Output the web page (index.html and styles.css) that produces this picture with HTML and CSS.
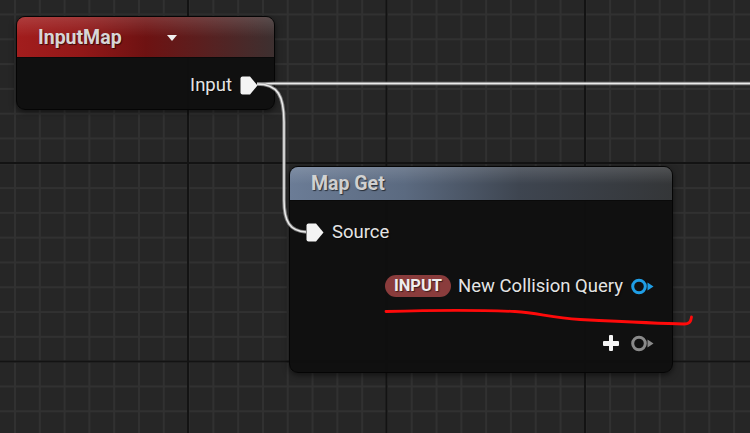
FILE: index.html
```html
<!DOCTYPE html>
<html lang="en">
<head>
  <meta charset="UTF-8" />
  <meta name="viewport" content="width=device-width, initial-scale=1.0"/>
  <title>Blueprint - Map Get</title>
  <link rel="stylesheet" href="styles.css">
</head>
<body>
  <div class="graph">

    <div class="node node-input">
      <div class="node-header header-red">
        <span class="node-title">InputMap</span>
        <span class="dropdown"></span>
      </div>
      <div class="node-body">
        <div class="pin-row out">
          <span class="pin-label">Input</span>
          <svg class="pin exec" width="18" height="19" viewBox="0 0 18 19"><path d="M2.5 0.5 H10 L17.5 9.5 L10 18.5 H2.5 Q0.5 18.5 0.5 16.5 V2.5 Q0.5 0.5 2.5 0.5 Z"/></svg>
        </div>
      </div>
    </div>

    <div class="node node-get">
      <div class="node-header header-blue">
        <span class="node-title">Map Get</span>
      </div>
      <div class="node-body">
        <div class="pin-row in first">
          <svg class="pin exec" width="18" height="19" viewBox="0 0 18 19"><path d="M2.5 0.5 H10 L17.5 9.5 L10 18.5 H2.5 Q0.5 18.5 0.5 16.5 V2.5 Q0.5 0.5 2.5 0.5 Z"/></svg>
          <span class="pin-label">Source</span>
        </div>
        <div class="pin-row out second">
          <span class="badge">INPUT</span>
          <span class="pin-label">New Collision Query</span>
          <svg class="pin ring blue" width="23" height="17" viewBox="0 0 23 17"><circle cx="8" cy="8.5" r="6.3" /><path class="tip" d="M16.5 4.5 L22.5 8.5 L16.5 12.5 Z"/></svg>
        </div>
        <div class="pin-row out third">
          <span class="plus"></span>
          <svg class="pin ring gray" width="23" height="17" viewBox="0 0 23 17"><circle cx="8" cy="8.5" r="6.3" /><path class="tip" d="M16.5 4.5 L22.5 8.5 L16.5 12.5 Z"/></svg>
        </div>
      </div>
    </div>

    <svg class="wires" width="750" height="433" viewBox="0 0 750 433">
      <!-- exec wire out of InputMap -->
      <path class="wire-glow" d="M257 84 C266 84 270 83 278 83.5 L750 83.5"/>
      <path class="wire" d="M257 84 C266 84 270 83 278 83.5 L750 83.5"/>
      <path class="wire-glow" d="M257 84 C278 84 284 96 284 122 L284 200 C284 222 290 231 306 232"/>
      <path class="wire" d="M257 84 C278 84 284 96 284 122 L284 200 C284 222 290 231 306 232"/>
      <!-- hand drawn mark -->
      <path class="scribble" d="M386 311.5 C420 310.5 480 310 515 311.5 C540 313 550 318 580 319.5 C620 321.5 660 323.5 684 324 C690 324 691 321 691.5 317"/>
    </svg>

  </div>
</body>
</html>
```

FILE: styles.css
```css
body {
  margin: 0;
  background: #262626;
  font-family: Roboto, "Liberation Sans", sans-serif;
}
.graph {
  position: relative;
  width: 750px;
  height: 433px;
  overflow: hidden;
  background-color: #262626;
  background-image:
    linear-gradient(to right, #131313 2px, transparent 2px),
    linear-gradient(to bottom, #131313 2px, transparent 2px),
    linear-gradient(to right, #313131 1.5px, transparent 1.5px),
    linear-gradient(to bottom, #313131 1.5px, transparent 1.5px);
  background-size:
    198.5px 198.5px,
    198.5px 198.5px,
    24.81px 24.81px,
    24.81px 24.81px;
  background-position:
    187px 162px,
    187px 162px,
    14px 13.5px,
    14px 13.5px;
}

/* nodes */
.node {
  position: absolute;
  z-index: 1;
  display: flex;
  flex-direction: column;
  background: rgba(15, 15, 15, 0.95);
  border: 1px solid #050505;
  border-radius: 9px;
  box-shadow: 0 2px 6px rgba(0, 0, 0, 0.55);
  overflow: hidden;
}
.node-input {
  left: 16px;
  top: 16px;
  width: 257px;
  height: 92px;
}
.node-get {
  left: 289px;
  top: 166px;
  width: 382px;
  height: 205px;
}
.node-header {
  display: flex;
  align-items: center;
  position: relative;
  box-sizing: border-box;
  border-bottom: 1px solid #0a0a0a;
}
.node-header::after {
  content: "";
  position: absolute;
  left: 0;
  right: 0;
  top: 0;
  height: 50%;
  background: linear-gradient(to bottom, rgba(255, 255, 255, 0.14), rgba(255, 255, 255, 0));
}
.header-red {
  height: 41px;
  padding-left: 21px;
  background: linear-gradient(to right, #a21d1d 0%, #921818 25%, #6e1212 50%, #5a1f1f 72%, #3d3030 100%);
}
.header-blue {
  height: 34px;
  padding-left: 21px;
  background: linear-gradient(to right, #6b7c96 0%, #5b6a80 30%, #3e4550 60%, #343638 100%);
}
.node-title {
  font-size: 19.5px;
  font-weight: bold;
  color: #d6d6d6;
  text-shadow: 1px 1px 1px rgba(0, 0, 0, 0.6);
}
.header-blue .node-title {
  color: #cfcfcf;
}
.dropdown {
  margin-left: 45px;
  margin-top: 2px;
  width: 0;
  height: 0;
  border-left: 5.5px solid transparent;
  border-right: 5.5px solid transparent;
  border-top: 6px solid #f0f0f0;
}

/* pins */
.node-body {
  display: flex;
  flex-direction: column;
  flex: 1;
}
.pin-row {
  display: flex;
  align-items: center;
  height: 30px;
}
.pin-row.out {
  justify-content: flex-end;
}
.node-input .pin-row {
  margin-top: 12px;
  padding-right: 16px;
}
.node-get .pin-row.first {
  margin-top: 16px;
  padding-left: 16px;
}
.node-get .pin-row.second {
  margin-top: 24px;
  padding-right: 18px;
}
.node-get .pin-row.third {
  margin-top: 27px;
  padding-right: 18px;
}
.pin {
  flex-shrink: 0;
  display: block;
}
.pin-label {
  font-size: 18.5px;
  color: #e4e4e4;
  white-space: nowrap;
  text-shadow: 1px 1px 1px rgba(0, 0, 0, 0.6);
}
.out .pin-label {
  margin-right: 8px;
}
.in .pin-label {
  margin-left: 8px;
}
.pin.exec path {
  fill: #f4f4f4;
}
.pin.ring circle {
  fill: none;
  stroke-width: 3px;
}
.pin.blue circle {
  stroke: #1f9ee6;
}
.pin.blue .tip {
  fill: #1f9ee6;
}
.pin.gray circle {
  stroke: #8a8a8a;
}
.pin.gray .tip {
  fill: #8a8a8a;
}
.badge {
  flex-shrink: 0;
  margin-right: 7px;
  height: 22px;
  padding: 0 9px;
  border-radius: 11px;
  background: #8a3c3c;
  color: #eeeeee;
  font-size: 16.5px;
  font-weight: bold;
  line-height: 22px;
  text-shadow: 1px 1px 1px rgba(0, 0, 0, 0.55);
}
.plus {
  flex-shrink: 0;
  position: relative;
  width: 16px;
  height: 16px;
  margin-right: 12px;
}
.plus::before,
.plus::after {
  content: "";
  position: absolute;
  background: #f4f4f4;
  border-radius: 1px;
}
.plus::before {
  left: 0;
  top: 6px;
  width: 16px;
  height: 4.5px;
}
.plus::after {
  left: 5.75px;
  top: 0;
  width: 4.5px;
  height: 16px;
}

/* wires */
.wires {
  position: absolute;
  left: 0;
  top: 0;
  z-index: 2;
  pointer-events: none;
}
.wire-glow {
  fill: none;
  stroke: rgba(150, 150, 150, 0.8);
  stroke-width: 3.5px;
}
.wire {
  fill: none;
  stroke: #ececec;
  stroke-width: 1.5px;
}
.scribble {
  fill: none;
  stroke: #ff0a0a;
  stroke-width: 2.8px;
  stroke-linecap: round;
  stroke-linejoin: round;
}
```
